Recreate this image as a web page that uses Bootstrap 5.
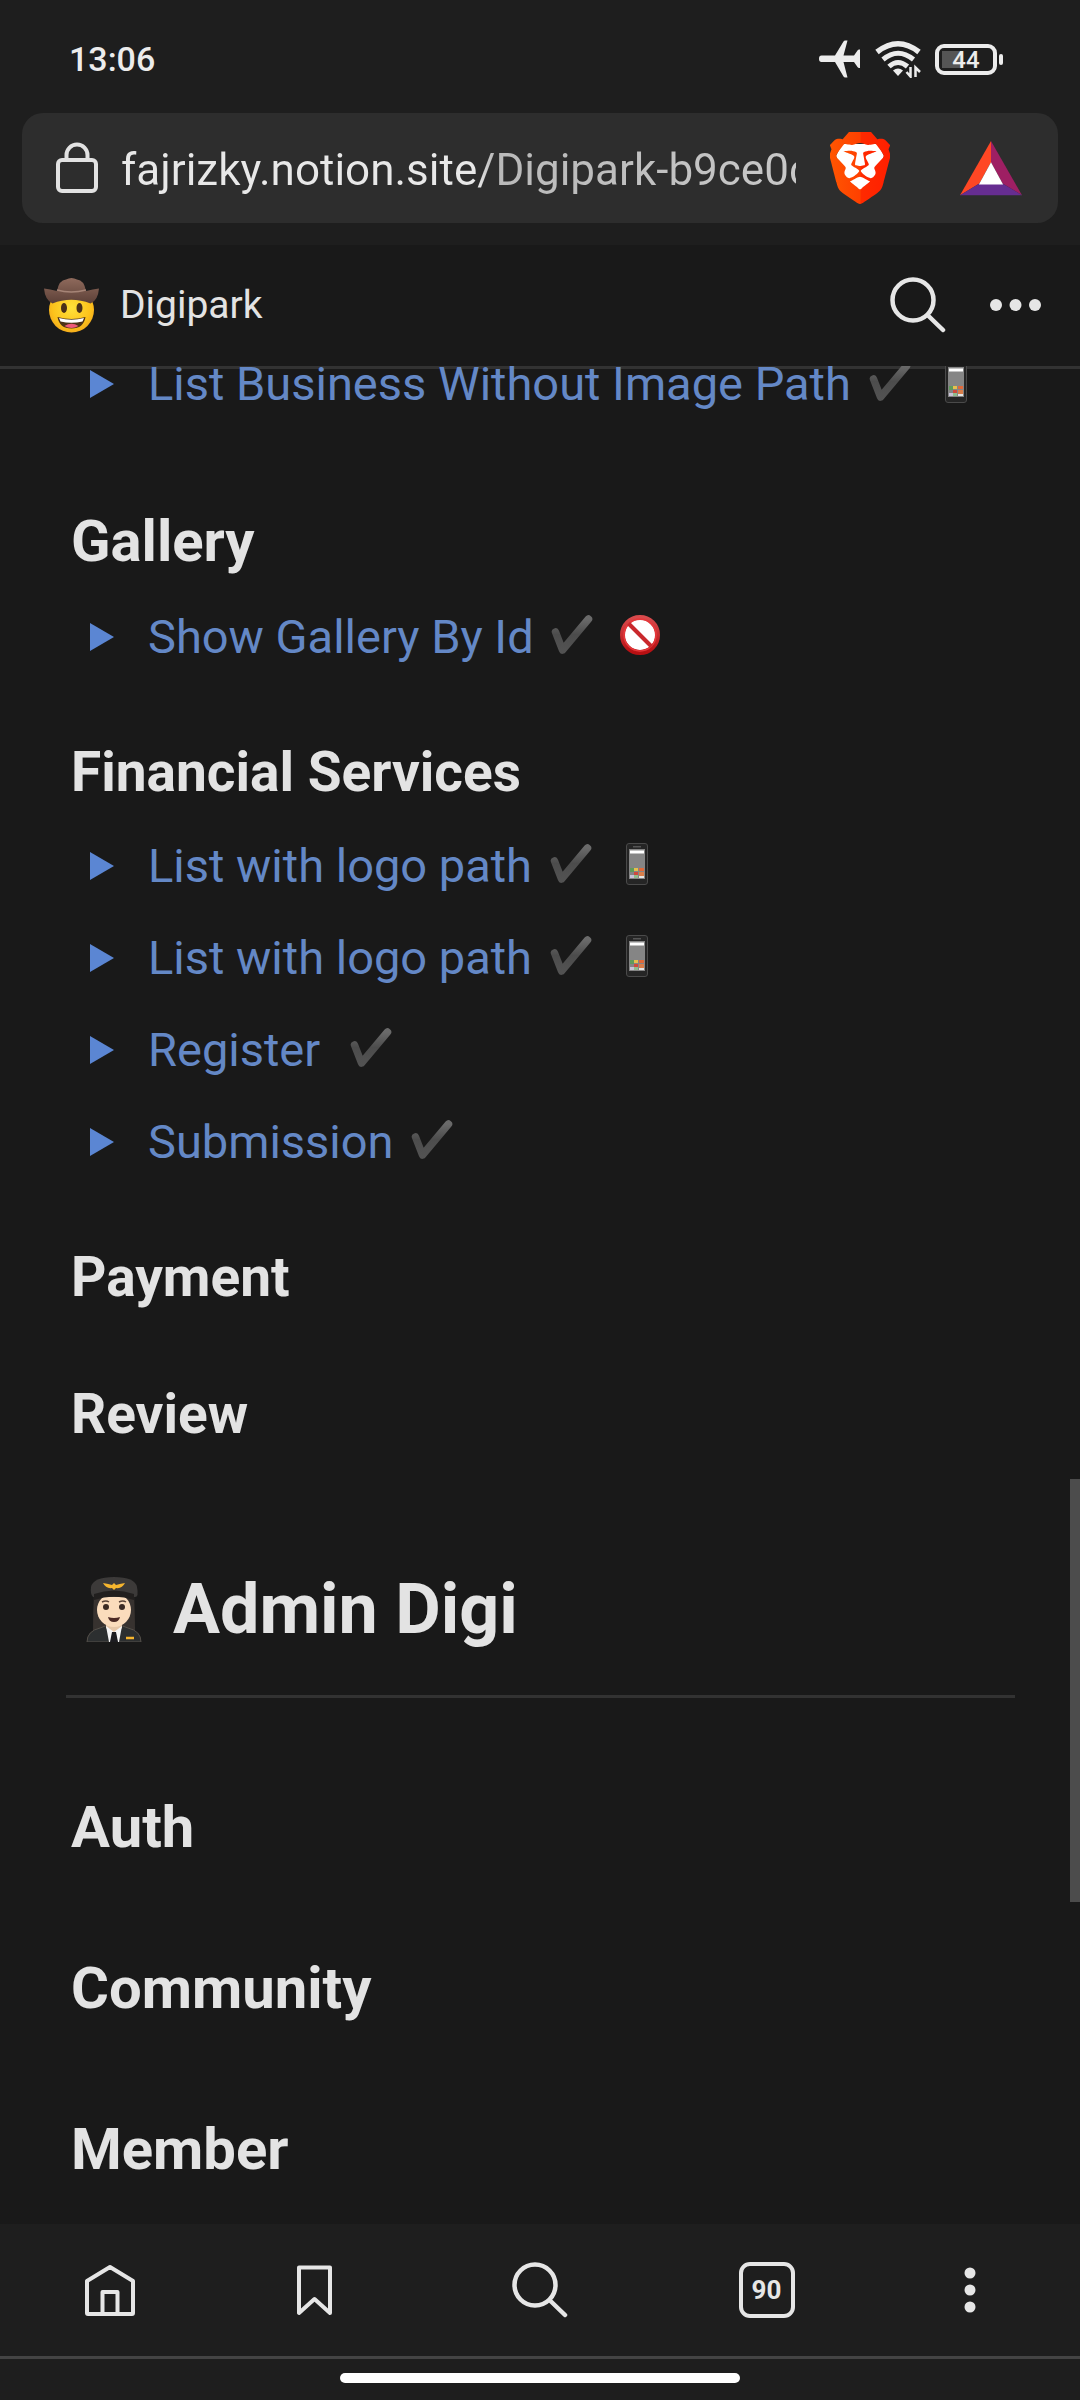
<!DOCTYPE html>
<html lang="en" data-bs-theme="dark">
<head>
<meta charset="utf-8">
<meta name="viewport" content="width=device-width, initial-scale=1">
<title>Digipark</title>
<link href="https://cdn.jsdelivr.net/npm/bootstrap@5.3.0/dist/css/bootstrap.min.css" rel="stylesheet">
<style>
  body { background: #191919; color: #e3e3e3; font-family: Roboto, "Liberation Sans", sans-serif; }
  svg { display: block; flex: none; }
  .chrome { background: #1e1e1e; }
  .icon-btn { background: none; border: 0; padding: 0; color: #e6e6e6; }

  .status-bar { height: 113px; padding: 5px 77px 0 69px; color: #ececec; }
  .clock { font-size: 34px; line-height: 40px; font-weight: 500; }
  .status-icons { gap: 13px; }
  .battery { width: 62px; height: 31px; border: 4px solid #ececec; border-radius: 9px; padding: 3px; }
  .battery-level { font-size: 24px; line-height: 18px; font-weight: 500; height: 17px;
    background: linear-gradient(#555, #555) no-repeat 0 0 / 20px 100%; }
  .battery-tip { width: 4px; height: 11px; border-radius: 2px; background: #ececec; margin-left: 2px; }

  .address-wrap { padding: 0 22px 22px; }
  .address-bar { height: 110px; border-radius: 21px; background: #2d2d2d; padding: 0 36px 0 34px; }
  .address-input { background: linear-gradient(90deg, #e8e8e8 357px, #b9b9b9 372px, #c8c8c8); -webkit-background-clip: text; background-clip: text;
    color: #e8e8e8; -webkit-text-fill-color: transparent; border: 0; outline: 0; padding: 4px 0 0;
    margin-left: 23px; margin-right: 34px; font-size: 44px; line-height: 60px; min-width: 0; }
  .rewards { margin-left: 70px; }

  .page-bar { height: 124px; padding: 2px 39px 3px 44px; border-bottom: 3px solid #323232; background: #191919; }
  .page-title { font-size: 39px; line-height: 48px; margin-left: 21px; color: #e3e3e3; }
  .page-tools { gap: 44px; }

  /* the scrolled text passes over the bar's bottom line */
  .doc { overflow: hidden; position: relative; margin-top: -3px; padding: 0 65px 25px 66px; }
  .doc-scroll { margin-top: -28px; }
  .doc h1, .doc h2, .doc h3 { margin: 0; padding: 0 0 12px 5px; font-weight: 700; color: #e3e3e3; }
  .doc h1 { font-size: 70px; line-height: 90px; margin: 102px 0 0; padding: 0 0 41px 19px; gap: 30px; border-bottom: 3px solid #323232; }
  .doc h2 { font-size: 58px; line-height: 76px; margin-top: 73px; }
  .doc h3 { font-size: 55px; line-height: 72px; margin-top: 53px; }
  .doc h1 + h2 { margin-top: 91px; }
  .toggle-row { padding: 13px 0 13px 23px; color: #6488c6; font-size: 47px; line-height: 66px; }
  .toggle-row .icon-btn { color: #5b86d3; margin-right: 34px; }
  .toggle-text svg { display: inline-block; vertical-align: -3px; }

  .scroll-thumb { position: absolute; right: 0; top: 1479px; width: 10px; height: 423px; background: #4c4c4c; }

  .toolbar { height: 135px; border-bottom: 3px solid #444; display: grid; grid-template-columns: 220fr 187fr 266fr 187fr 220fr; place-items: center; }
  .tab-count { width: 56px; height: 56px; border: 4px solid #e6e6e6; border-radius: 11px; font-size: 26px; line-height: 46px; font-weight: 700; }
  .gesture { padding: 14px 0 17px; }
  .gesture-pill { width: 37%; height: 10px; border-radius: 5px; background: #fff; }
</style>
</head>
<body class="d-flex flex-column min-vh-100 position-relative">

<svg width="0" height="0" class="position-absolute" aria-hidden="true">
  <defs>
    <linearGradient id="gCheck" x1="0" y1="0" x2="0" y2="1"><stop offset="0" stop-color="#6a6a6a"/><stop offset=".5" stop-color="#4c4c4c"/><stop offset="1" stop-color="#525252"/></linearGradient>
    <linearGradient id="gBrave" x1="0" y1="0" x2="1" y2="0"><stop offset="0" stop-color="#ff5601"/><stop offset=".5" stop-color="#ff4000"/><stop offset=".52" stop-color="#ff2a00"/><stop offset="1" stop-color="#ff1f00"/></linearGradient>
    <linearGradient id="gNo" x1="0" y1="0" x2="0" y2="1"><stop offset="0" stop-color="#d84a4c"/><stop offset="1" stop-color="#b70f12"/></linearGradient>
    <radialGradient id="gFace" cx=".5" cy=".45" r=".6"><stop offset="0" stop-color="#ffe13a"/><stop offset=".7" stop-color="#fcc21b"/><stop offset="1" stop-color="#f2a51c"/></radialGradient>
    <linearGradient id="gHat" x1="0" y1="0" x2="0" y2="1"><stop offset="0" stop-color="#8f6a5c"/><stop offset="1" stop-color="#5c4037"/></linearGradient>
    <symbol id="check" viewBox="0 0 56 42"><path d="M10.500 18 17.500 36 43.500 5" fill="none" stroke="url(#gCheck)" stroke-width="7.500" stroke-linecap="round" stroke-linejoin="round"/></symbol>
    <symbol id="phone" viewBox="0 0 56 42">
      <rect x="15.500" y=".5" width="21" height="41" rx="2.500" fill="#252525" stroke="#4a4a4a"/>
      <rect x="22" y="3" width="8" height="1.500" fill="#555"/>
      <rect x="18" y="6" width="16" height="30" fill="#858585"/>
      <rect x="19" y="7.500" width="14" height="3" fill="#fff"/>
      <rect x="19" y="25" width="4" height="4" fill="#5f9a5c"/><rect x="23" y="25" width="4" height="3" fill="#e6c04d"/><rect x="28" y="25" width="5" height="3" fill="#e0693a"/>
      <rect x="23" y="29" width="4" height="3" fill="#cf4a3e"/><rect x="28" y="29" width="5" height="4" fill="#d97e4a"/>
      <rect x="19" y="32" width="4" height="3" fill="#c9c2d8"/><rect x="23" y="32" width="4" height="3" fill="#90bd8c"/><rect x="28" y="33" width="5" height="2" fill="#e4e4e4"/>
    </symbol>
    <symbol id="noentry" viewBox="0 0 56 42">
      <circle cx="27" cy="21" r="17.500" fill="#fff" stroke="url(#gNo)" stroke-width="5"/>
      <circle cx="27" cy="21" r="16" fill="none" stroke="#e8383b" stroke-width="1.500"/>
      <path d="M15.500 9.500 38.500 32.500" stroke="#c9282c" stroke-width="4"/>
    </symbol>
    <symbol id="tri" viewBox="0 0 25 28"><path d="M1 0v28L25 14z" fill="currentColor"/></symbol>
    <symbol id="magnifier" viewBox="0 0 56 56"><circle cx="23" cy="23" r="20.500" fill="none" stroke="currentColor" stroke-width="4.500"/><path d="M38 38.500 53 53" stroke="currentColor" stroke-width="4.500" stroke-linecap="round"/></symbol>
  </defs>
</svg>

<header class="chrome">
  <div class="status-bar d-flex align-items-center justify-content-between">
    <div class="clock">13:06</div>
    <div class="status-icons d-flex align-items-center">
      <svg width="42" height="38" viewBox="0 0 42 38" fill="#ececec" role="img" aria-label="Airplane mode"><path d="M2.500 15.500H16L24.500 1.500q.5-1 1.800-1h2.200L24.500 15.500H35l3.500-5q.5-1 1.800-1H41v18.500h-.700q-1.300 0-1.800-1L35 22H24.500l4 15.500h-2.200q-1.300 0-1.800-1L16 22H2.500Q0 22 0 18.750T2.500 15.500z"/></svg>
      <svg width="48" height="38" viewBox="0 0 48 38" fill="none" stroke="#ececec" role="img" aria-label="Wi-Fi"><path d="M3 12Q24-4.500 45 12" stroke-width="5.500"/><path d="M9 19.500q15-12.500 30.500 0" stroke-width="5"/><path d="M15 26.500q9-8 18.500 0" stroke-width="5"/><path d="M19 30.500q5-4 10 0L24 36z" fill="#ececec" stroke="none"/><path d="M36.500 27v9.500l-4-4.500M41.500 37v-9.500l4.500 4.500" stroke-width="2.500"/></svg>
      <div class="d-flex align-items-center">
        <div class="battery"><div class="battery-level text-center">44</div></div>
        <div class="battery-tip"></div>
      </div>
    </div>
  </div>

  <div class="address-wrap">
    <div class="address-bar d-flex align-items-center">
      <svg width="42" height="52" viewBox="0 0 42 52" fill="none" stroke="#e2e2e2" stroke-width="4" aria-hidden="true"><rect x="2" y="18" width="38" height="31" rx="4"/><path d="M10.500 18v-5a10.500 10.500 0 0 1 21 0v5"/></svg>
      <input class="address-input flex-grow-1" type="text" aria-label="Address" value="fajrizky.notion.site/Digipark-b9ce0c">
      <button class="icon-btn" type="button" aria-label="Brave Shields">
        <svg width="60" height="72" viewBox="2 0 20 24">
          <path d="M6 4h12l2 4-3 7-5 5-5-5-3-7z" fill="#fff"/>
          <path fill="url(#gBrave)" fill-rule="evenodd" d="M15.680 0l2.096 2.380s1.840-.512 2.709.358c.868.870 1.584 1.638 1.584 1.638l-.562 1.381.715 2.047s-2.104 7.980-2.350 8.955c-.486 1.919-.818 2.660-2.198 3.633-1.380.972-3.884 2.660-4.293 2.916-.409.256-.920.692-1.380.692-.460 0-.970-.436-1.380-.692a185.796 185.796 0 01-4.293-2.916c-1.380-.973-1.712-1.714-2.197-3.633-.247-.975-2.351-8.955-2.351-8.955l.715-2.047-.562-1.381s.716-.768 1.585-1.638c.868-.870 2.708-.358 2.708-.358L8.321 0h7.360zm-3.679 14.936c-.140 0-1.038.317-1.758.690-.720.373-1.242.637-1.409.742-.167.104-.065.301.087.409.152.107 2.194 1.690 2.393 1.866.198.175.489.464.687.464.198 0 .490-.290.688-.464.198-.175 2.240-1.759 2.392-1.866.152-.108.254-.305.087-.410-.167-.104-.689-.368-1.410-.741-.720-.373-1.617-.690-1.757-.690zm0-11.278s-.409.001-1.022.206-1.278.460-1.584.460c-.307 0-2.581-.434-2.581-.434S4.119 7.152 4.119 7.849c0 .697.339.881.680 1.243l2.020 2.149c.192.203.590.511.356 1.066-.235.555-.580 1.260-.196 1.977.384.716 1.042 1.194 1.464 1.115.421-.080 1.412-.598 1.776-.834.364-.237 1.518-1.190 1.518-1.554 0-.365-1.193-1.020-1.413-1.168-.220-.150-1.226-.725-1.247-.950-.020-.227-.012-.293.284-.851.297-.559.831-1.304.742-1.800-.089-.495-.950-.753-1.565-.986-.615-.232-1.799-.671-1.947-.740-.148-.068-.110-.133.339-.175.448-.043 1.719-.212 2.292-.052.573.160 1.552.403 1.632.532.079.130.149.134.067.579-.081.445-.500 2.581-.541 2.960-.040.380-.120.630.288.724.409.094 1.097.256 1.333.256s.924-.162 1.333-.256c.408-.093.329-.344.288-.723-.040-.380-.460-2.516-.541-2.961-.082-.445-.012-.450.067-.579.080-.129 1.059-.372 1.632-.532.573-.160 1.845.009 2.292.052.449.042.487.107.339.175-.148.069-1.332.508-1.947.740-.615.233-1.476.490-1.565.986-.090.496.445 1.241.742 1.800.297.558.304.624.284.850-.020.226-1.026.802-1.247.950-.220.150-1.413.804-1.413 1.169 0 .364 1.154 1.317 1.518 1.554.364.236 1.355.755 1.776.834.422.079 1.080-.400 1.464-1.115.384-.716.039-1.422-.195-1.977-.235-.555.163-.863.355-1.066l2.020-2.149c.341-.362.680-.546.680-1.243 0-.697-2.695-3.960-2.695-3.960s-2.274.436-2.580.436c-.307 0-.972-.256-1.585-.461-.613-.205-1.022-.206-1.022-.206z"/>
        </svg>
      </button>
      <button class="icon-btn rewards" type="button" aria-label="Brave Rewards">
        <svg width="62" height="56" viewBox="0 0 64 56"><path d="M32 0 0 56 20 44 32 22z" fill="#ff4724"/><path d="M32 0 64 56 44 44 32 22z" fill="#9e1f63"/><path d="M0 56h64L44 44H20z" fill="#662d91"/><path d="M32 22 44.500 45h-25z" fill="#fff"/></svg>
      </button>
    </div>
  </div>
</header>

<nav class="page-bar d-flex align-items-center" aria-label="Page">
  <a href="#" class="d-flex align-items-center text-decoration-none">
    <svg width="55" height="55" viewBox="0 0 55 55" role="img" aria-label="Cowboy">
      <circle cx="27.500" cy="32" r="22.500" fill="url(#gFace)"/>
      <path d="M0 10.500Q6 11 13 13 15 2 22 1.500q5.500-3 11 0Q40 2 42 13q7-2 13-2.500-1 12-8.500 15Q27 18 8.500 25.500 1 22 0 10.500z" fill="url(#gHat)"/>
      <path d="M13 12q14 4 29 0" fill="none" stroke="#a68577" stroke-width="1.500"/>
      <ellipse cx="20" cy="30" rx="3" ry="5" fill="#4a3019"/><ellipse cx="35.500" cy="30" rx="3" ry="5" fill="#4a3019"/>
      <path d="M13.500 39q14 4 28 0-2 11.500-14 11.500T13.500 39z" fill="#4e3317"/><path d="M15 40q12.500 3.500 25 0l-1.500 3.500q-11 2.500-22 0z" fill="#fff"/><path d="M20.500 48q7-4.500 14 0-7 4-14 0z" fill="#ef5a7a"/>
    </svg>
    <span class="page-title">Digipark</span>
  </a>
  <div class="page-tools d-flex align-items-center ms-auto">
    <button class="icon-btn" type="button" aria-label="Search"><svg width="56" height="56"><use href="#magnifier"/></svg></button>
    <button class="icon-btn" type="button" aria-label="More"><svg width="51" height="12" viewBox="0 0 51 12" fill="currentColor"><circle cx="6" cy="6" r="6"/><circle cx="25.500" cy="6" r="6"/><circle cx="45" cy="6" r="6"/></svg></button>
  </div>
</nav>

<main class="doc flex-grow-1">
  <div class="doc-scroll">
    <div class="toggle-row d-flex align-items-center"><button class="icon-btn" type="button" aria-label="Expand"><svg width="25" height="28"><use href="#tri"/></svg></button><span class="toggle-text">List Business Without Image Path <svg width="56" height="42"><use href="#check"/></svg> <svg width="56" height="42"><use href="#phone"/></svg></span></div>

    <h2>Gallery</h2>
    <div class="toggle-row d-flex align-items-center"><button class="icon-btn" type="button" aria-label="Expand"><svg width="25" height="28"><use href="#tri"/></svg></button><span class="toggle-text">Show Gallery By Id <svg width="56" height="42"><use href="#check"/></svg> <svg width="56" height="42"><use href="#noentry"/></svg></span></div>

    <h3>Financial Services</h3>
    <div class="toggle-row d-flex align-items-center"><button class="icon-btn" type="button" aria-label="Expand"><svg width="25" height="28"><use href="#tri"/></svg></button><span class="toggle-text">List with logo path <svg width="56" height="42"><use href="#check"/></svg> <svg width="56" height="42"><use href="#phone"/></svg></span></div>
    <div class="toggle-row d-flex align-items-center"><button class="icon-btn" type="button" aria-label="Expand"><svg width="25" height="28"><use href="#tri"/></svg></button><span class="toggle-text">List with logo path <svg width="56" height="42"><use href="#check"/></svg> <svg width="56" height="42"><use href="#phone"/></svg></span></div>
    <div class="toggle-row d-flex align-items-center"><button class="icon-btn" type="button" aria-label="Expand"><svg width="25" height="28"><use href="#tri"/></svg></button><span class="toggle-text">Register&nbsp; <svg width="56" height="42"><use href="#check"/></svg></span></div>
    <div class="toggle-row d-flex align-items-center"><button class="icon-btn" type="button" aria-label="Expand"><svg width="25" height="28"><use href="#tri"/></svg></button><span class="toggle-text">Submission <svg width="56" height="42"><use href="#check"/></svg></span></div>

    <h3>Payment</h3>
    <h3>Review</h3>

    <h1 class="d-flex align-items-center">
      <svg width="58" height="66" viewBox="0 0 58 66" role="img" aria-label="Pilot">
        <path d="M9 18h40q1 22 1 36H8Q8 36 9 18z" fill="#37322f"/>
        <path d="M2 66q0-11 13-14l8-3h12l8 3q13 3 13 14z" fill="#2c2f30" stroke="#55504a" stroke-width="1"/>
        <path d="M21 45h16v7l-8 6-8-6z" fill="#e6c7a8"/><path d="M21 50l8 6 8-6-3 16H24z" fill="#f5f5f5"/><path d="M27 56h4l2 10h-8z" fill="#1c1c20"/>
        <ellipse cx="29" cy="34" rx="17" ry="17" fill="#fadcbc"/>
        <path d="M6 11Q8 1 29 1t23 10-2 10H8Q5 18 6 11z" fill="#3c3a39"/><path d="M9 18q20-7 40 0v6q-20-7-40 0z" fill="#211f1e"/>
        <path d="M18 7q6 1 9 2l2-2 2 2q3-1 9-2-3 6-9 5l-2 2-2-2q-6 1-9-5z" fill="#f5b52e"/>
        <path d="M17 26q4-2 7 0M34 26q4-2 7 0" stroke="#5b4538" stroke-width="1.500" fill="none"/>
        <circle cx="21" cy="31" r="3" fill="#3b2b24"/><circle cx="37" cy="31" r="3" fill="#3b2b24"/>
        <path d="M23 41q6 2 12 0-1 5-6 5t-6-5z" fill="#4b2a25"/><path d="M41 62h8" stroke="#f5b52e" stroke-width="2.500"/>
      </svg>
      <span>Admin Digi</span>
    </h1>

    <h2>Auth</h2>
    <h2>Community</h2>
    <h2>Member</h2>
  </div>
</main>

<div class="scroll-thumb"></div>

<footer class="chrome">
  <nav class="toolbar" aria-label="Browser">
    <button class="icon-btn" type="button" aria-label="Home"><svg width="56" height="56" viewBox="0 0 56 56" fill="none" stroke="currentColor" stroke-width="4" stroke-linejoin="round"><path d="M5 19 28 5l23 14v32q0 1-1 1H6q-1 0-1-1zM20.500 52V30h15v22"/></svg></button>
    <button class="icon-btn" type="button" aria-label="Bookmarks"><svg width="56" height="56" viewBox="0 0 56 56" fill="none" stroke="currentColor" stroke-width="4" stroke-linejoin="round"><path d="M13 5.500h31V51L28.500 37 13 51z"/></svg></button>
    <button class="icon-btn" type="button" aria-label="Search"><svg width="56" height="56"><use href="#magnifier"/></svg></button>
    <button class="icon-btn tab-count" type="button" aria-label="Tabs, 90 open">90</button>
    <button class="icon-btn" type="button" aria-label="Menu"><svg width="12" height="46" viewBox="0 0 12 46" fill="currentColor"><circle cx="6" cy="6" r="5.500"/><circle cx="6" cy="23" r="5.500"/><circle cx="6" cy="40" r="5.500"/></svg></button>
  </nav>
  <div class="gesture"><div class="gesture-pill mx-auto"></div></div>
</footer>

<script src="https://cdn.jsdelivr.net/npm/bootstrap@5.3.0/dist/js/bootstrap.bundle.min.js"></script>
</body>
</html>
